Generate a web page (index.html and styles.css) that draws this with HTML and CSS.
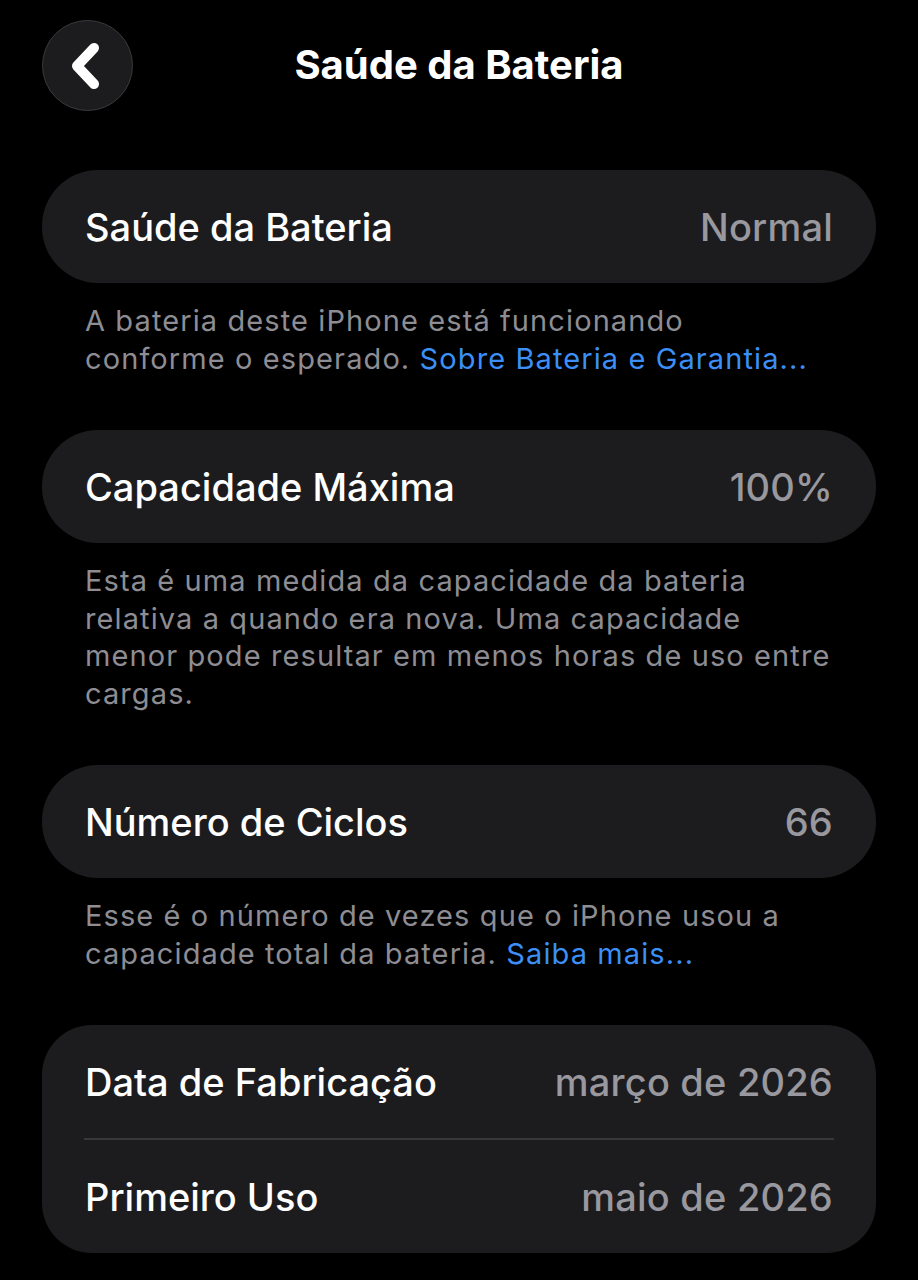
FILE: index.html
```html
<!DOCTYPE html>
<html lang="pt">
<head>
<meta charset="utf-8">
<link rel="stylesheet" href="styles.css">
</head>
<body>
<div class="screen">
  <header class="nav">
    <button class="back" aria-label="Voltar">
      <svg width="40" height="48" viewBox="0 0 40 48"><path d="M28 6 L11 24 L28 42" fill="none" stroke="#fff" stroke-width="10" stroke-linecap="round" stroke-linejoin="round"/></svg>
    </button>
    <h1 class="title">Saúde da Bateria</h1>
  </header>

  <section class="group">
    <div class="row"><span class="label">Saúde da Bateria</span><span class="value">Normal</span></div>
  </section>
  <p class="footer">A bateria deste iPhone está funcionando conforme o esperado. <span class="link">Sobre Bateria e Garantia...</span></p>

  <section class="group">
    <div class="row"><span class="label">Capacidade Máxima</span><span class="value">100%</span></div>
  </section>
  <p class="footer">Esta é uma medida da capacidade da bateria relativa a quando era nova. Uma capacidade menor pode resultar em menos horas de uso entre cargas.</p>

  <section class="group">
    <div class="row"><span class="label">Número de Ciclos</span><span class="value">66</span></div>
  </section>
  <p class="footer">Esse é o número de vezes que o iPhone usou a capacidade total da bateria. <span class="link">Saiba mais...</span></p>

  <section class="group tall">
    <div class="row"><span class="label">Data de Fabricação</span><span class="value">março de 2026</span></div>
    <div class="divider"></div>
    <div class="row"><span class="label">Primeiro Uso</span><span class="value">maio de 2026</span></div>
  </section>
</div>
</body>
</html>
```
FILE: styles.css
```css
html, body {
  margin: 0;
  padding: 0;
  background: #000;
}
body {
  width: 918px;
  height: 1280px;
  overflow: hidden;
  font-family: Inter, "Noto Sans", sans-serif;
  color: #fff;
}
.screen {
  padding: 0 42px;
}
.nav {
  position: relative;
  height: 170px;
  display: flex;
  align-items: flex-start;
}
.back {
  margin-top: 20px;
  width: 91px;
  height: 91px;
  border-radius: 50%;
  background: #1c1c1e;
  border: 1.5px solid #3a3a3c;
  display: flex;
  align-items: center;
  justify-content: center;
  padding: 0 4px 0 0;
  box-sizing: border-box;
}
.title {
  position: absolute;
  left: 0;
  right: 0;
  top: 42px;
  margin: 0;
  text-align: center;
  font-size: 40px;
  font-weight: 700;
  line-height: 46px;
  letter-spacing: 0;
  pointer-events: none;
}
.group {
  background: #1c1c1e;
  border-radius: 56px;
}
.group.tall {
  border-radius: 50px;
}
.row {
  height: 113px;
  display: flex;
  align-items: center;
  justify-content: space-between;
  padding: 0 43px;
}
.label {
  font-size: 38px;
  font-weight: 500;
  letter-spacing: 0;
}
.value {
  font-size: 38px;
  font-weight: 500;
  color: #98989e;
  letter-spacing: 0.2px;
}
.divider {
  height: 2px;
  background: #38383a;
  margin: 0 42px;
}
.footer {
  margin: 19px 0 53px;
  padding: 0 43px;
  font-size: 29px;
  line-height: 37.5px;
  color: #8d8d93;
  letter-spacing: 1.1px;
}
.link {
  color: #3b8ff6;
}
```
